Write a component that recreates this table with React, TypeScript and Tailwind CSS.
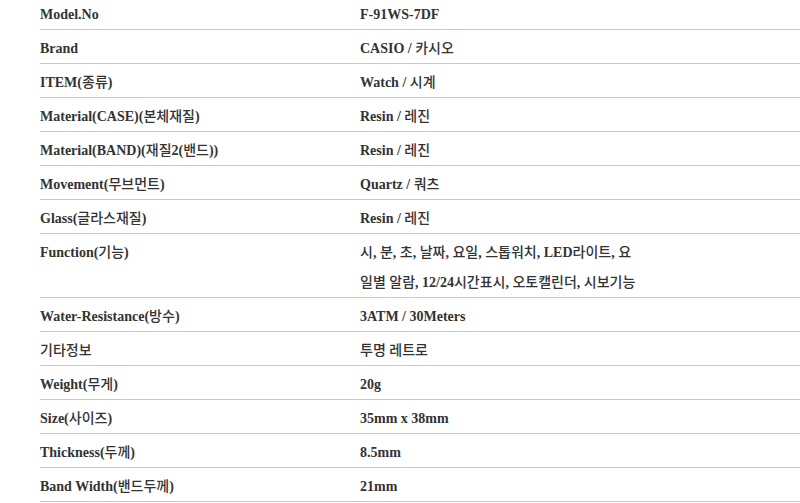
import React from "react";

const rows: [string, string[]][] = [
  ["Model.No", ["F-91WS-7DF"]],
  ["Brand", ["CASIO / 카시오"]],
  ["ITEM(종류)", ["Watch / 시계"]],
  ["Material(CASE)(본체재질)", ["Resin / 레진"]],
  ["Material(BAND)(재질2(밴드))", ["Resin / 레진"]],
  ["Movement(무브먼트)", ["Quartz / 쿼츠"]],
  ["Glass(글라스재질)", ["Resin / 레진"]],
  ["Function(기능)", ["시, 분, 초, 날짜, 요일, 스톱워치, LED라이트, 요", "일별 알람, 12/24시간표시, 오토캘린더, 시보기능"]],
  ["Water-Resistance(방수)", ["3ATM / 30Meters"]],
  ["기타정보", ["투명 레트로"]],
  ["Weight(무게)", ["20g"]],
  ["Size(사이즈)", ["35mm x 38mm"]],
  ["Thickness(두께)", ["8.5mm"]],
  ["Band Width(밴드두께)", ["21mm"]],
];

function Mixed({ text }: { text: string }) {
  const parts = text.split(/([\uAC00-\uD7A3\u3131-\u318E]+)/);
  return (
    <>
      {parts.map((p, i) =>
        /[\uAC00-\uD7A3\u3131-\u318E]/.test(p) ? (
          <span key={i} className="font-medium font-['Noto_Sans_CJK_KR',sans-serif] text-[14px] leading-none">
            {p}
          </span>
        ) : (
          <span key={i}>{p}</span>
        )
      )}
    </>
  );
}

export default function App() {
  return (
    <div className="w-[800px] h-[503px] overflow-hidden bg-white">
      <div className="ml-[40px] w-[760px] -mt-[4px] font-['Liberation_Serif',serif] font-bold text-[14px] text-[#333]">
        {rows.map(([k, v], i) => (
          <div
            key={i}
            className={`grid grid-cols-[320px_1fr] border-b border-[#c8c8c8] pt-[4px] leading-[30px] ${v.length > 1 ? "h-[64px]" : "h-[34px]"}`}
          >
            <div className="h-[30px]">
              <Mixed text={k} />
            </div>
            <div>
              {v.map((line, j) => (
                <div key={j} className="h-[30px]">
                  <Mixed text={line} />
                </div>
              ))}
            </div>
          </div>
        ))}
      </div>
    </div>
  );
}
